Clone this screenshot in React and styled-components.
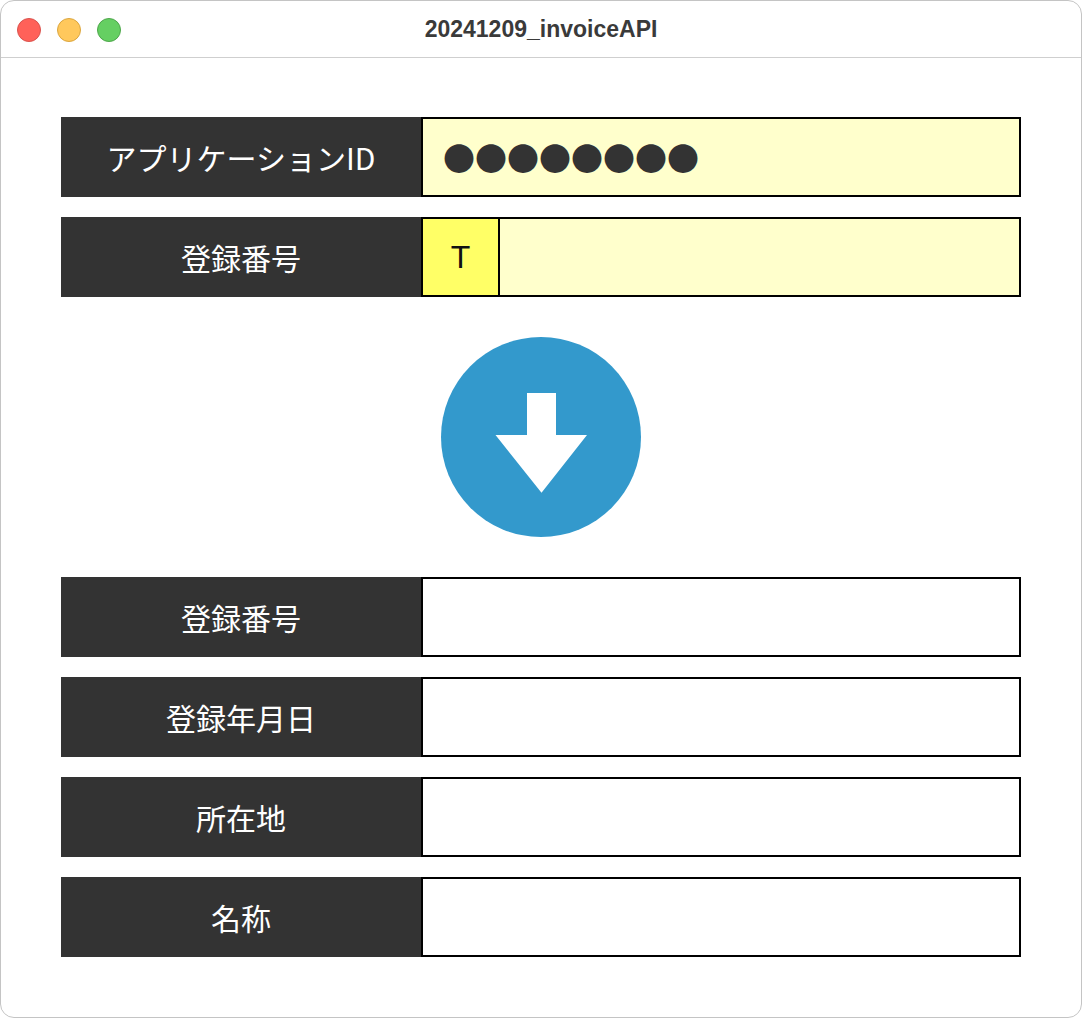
import React from "react";
import styled, { createGlobalStyle } from "styled-components";

const GlobalStyle = createGlobalStyle`
  html, body { margin:0; padding:0; background:#fff; }
  * { box-sizing:border-box; }
`;

const Window = styled.div`
  width:1082px;height:1018px;
  background:#fff;
  border:1px solid #c4c4c4;
  border-radius:14px;
  overflow:hidden;
  font-family:"Noto Sans CJK JP","Liberation Sans",sans-serif;
  position:relative;
`;
const TitleBar = styled.header`
  height:57px;
  border-bottom:1px solid #cfcfcf;
  display:flex;align-items:center;justify-content:center;
`;
const Lights = styled.div`
  position:absolute;left:16px;top:17px;
  display:flex;gap:16px;
`;
const Light = styled.span`
  width:24px;height:24px;border-radius:50%;
  background:${({ color }) => color};
  border:1px solid ${({ edge }) => edge};
`;
const WindowTitle = styled.h1`
  margin:0;
  font:700 23px "Liberation Sans",Arial,sans-serif;
  color:#3a3a3a;
`;
const Content = styled.main`
  padding:59px 60px 0;
  display:flex;flex-direction:column;
`;
const Form = styled.section`
  display:flex;flex-direction:column;gap:20px;
`;
const Row = styled.div`
  display:flex;height:80px;
`;
const Label = styled.div`
  width:360px;flex:none;
  background:#333;color:#fff;
  font-size:30px;
  display:flex;align-items:center;justify-content:center;
`;
const Value = styled.div`
  flex:1;
  display:flex;align-items:center;
  border:2px solid #000;
  background:${({ $filled }) => ($filled ? "#ffc" : "#fff")};
  padding-left:${({ $pad }) => ($pad ? "20px" : "0")};
  color:#333;
  font-size:32px;
`;
const Prefix = styled.div`
  width:77px;height:100%;
  background:#ff6;
  border-right:2px solid #000;
  color:#111;
  font:32px "Liberation Sans",Arial,sans-serif;
  display:flex;align-items:center;justify-content:center;
`;
const ArrowWrap = styled.div`
  display:flex;justify-content:center;
  padding:40px 0;
`;

const rows = ["登録番号", "登録年月日", "所在地", "名称"];

export default function App() {
  return (
    <Window>
      <GlobalStyle />
      <TitleBar>
        <Lights>
          <Light color="#ff6159" edge="#d9534e" />
          <Light color="#ffc85c" edge="#dba63f" />
          <Light color="#65cf62" edge="#4ea64b" />
        </Lights>
        <WindowTitle>20241209_invoiceAPI</WindowTitle>
      </TitleBar>
      <Content>
        <Form>
          <Row>
            <Label>アプリケーションID</Label>
            <Value $filled $pad>●●●●●●●●</Value>
          </Row>
          <Row>
            <Label>登録番号</Label>
            <Value $filled><Prefix>T</Prefix></Value>
          </Row>
        </Form>
        <ArrowWrap>
          <svg width="200" height="200" viewBox="0 0 200 200">
            <circle cx="100" cy="100" r="100" fill="#39c" />
            <path d="M86 56h29v42h31l-45.500 57.700L54.500 98H86z" fill="#fff" />
          </svg>
        </ArrowWrap>
        <Form>
          {rows.map((r) => (
            <Row key={r}>
              <Label>{r}</Label>
              <Value />
            </Row>
          ))}
        </Form>
      </Content>
    </Window>
  );
}
